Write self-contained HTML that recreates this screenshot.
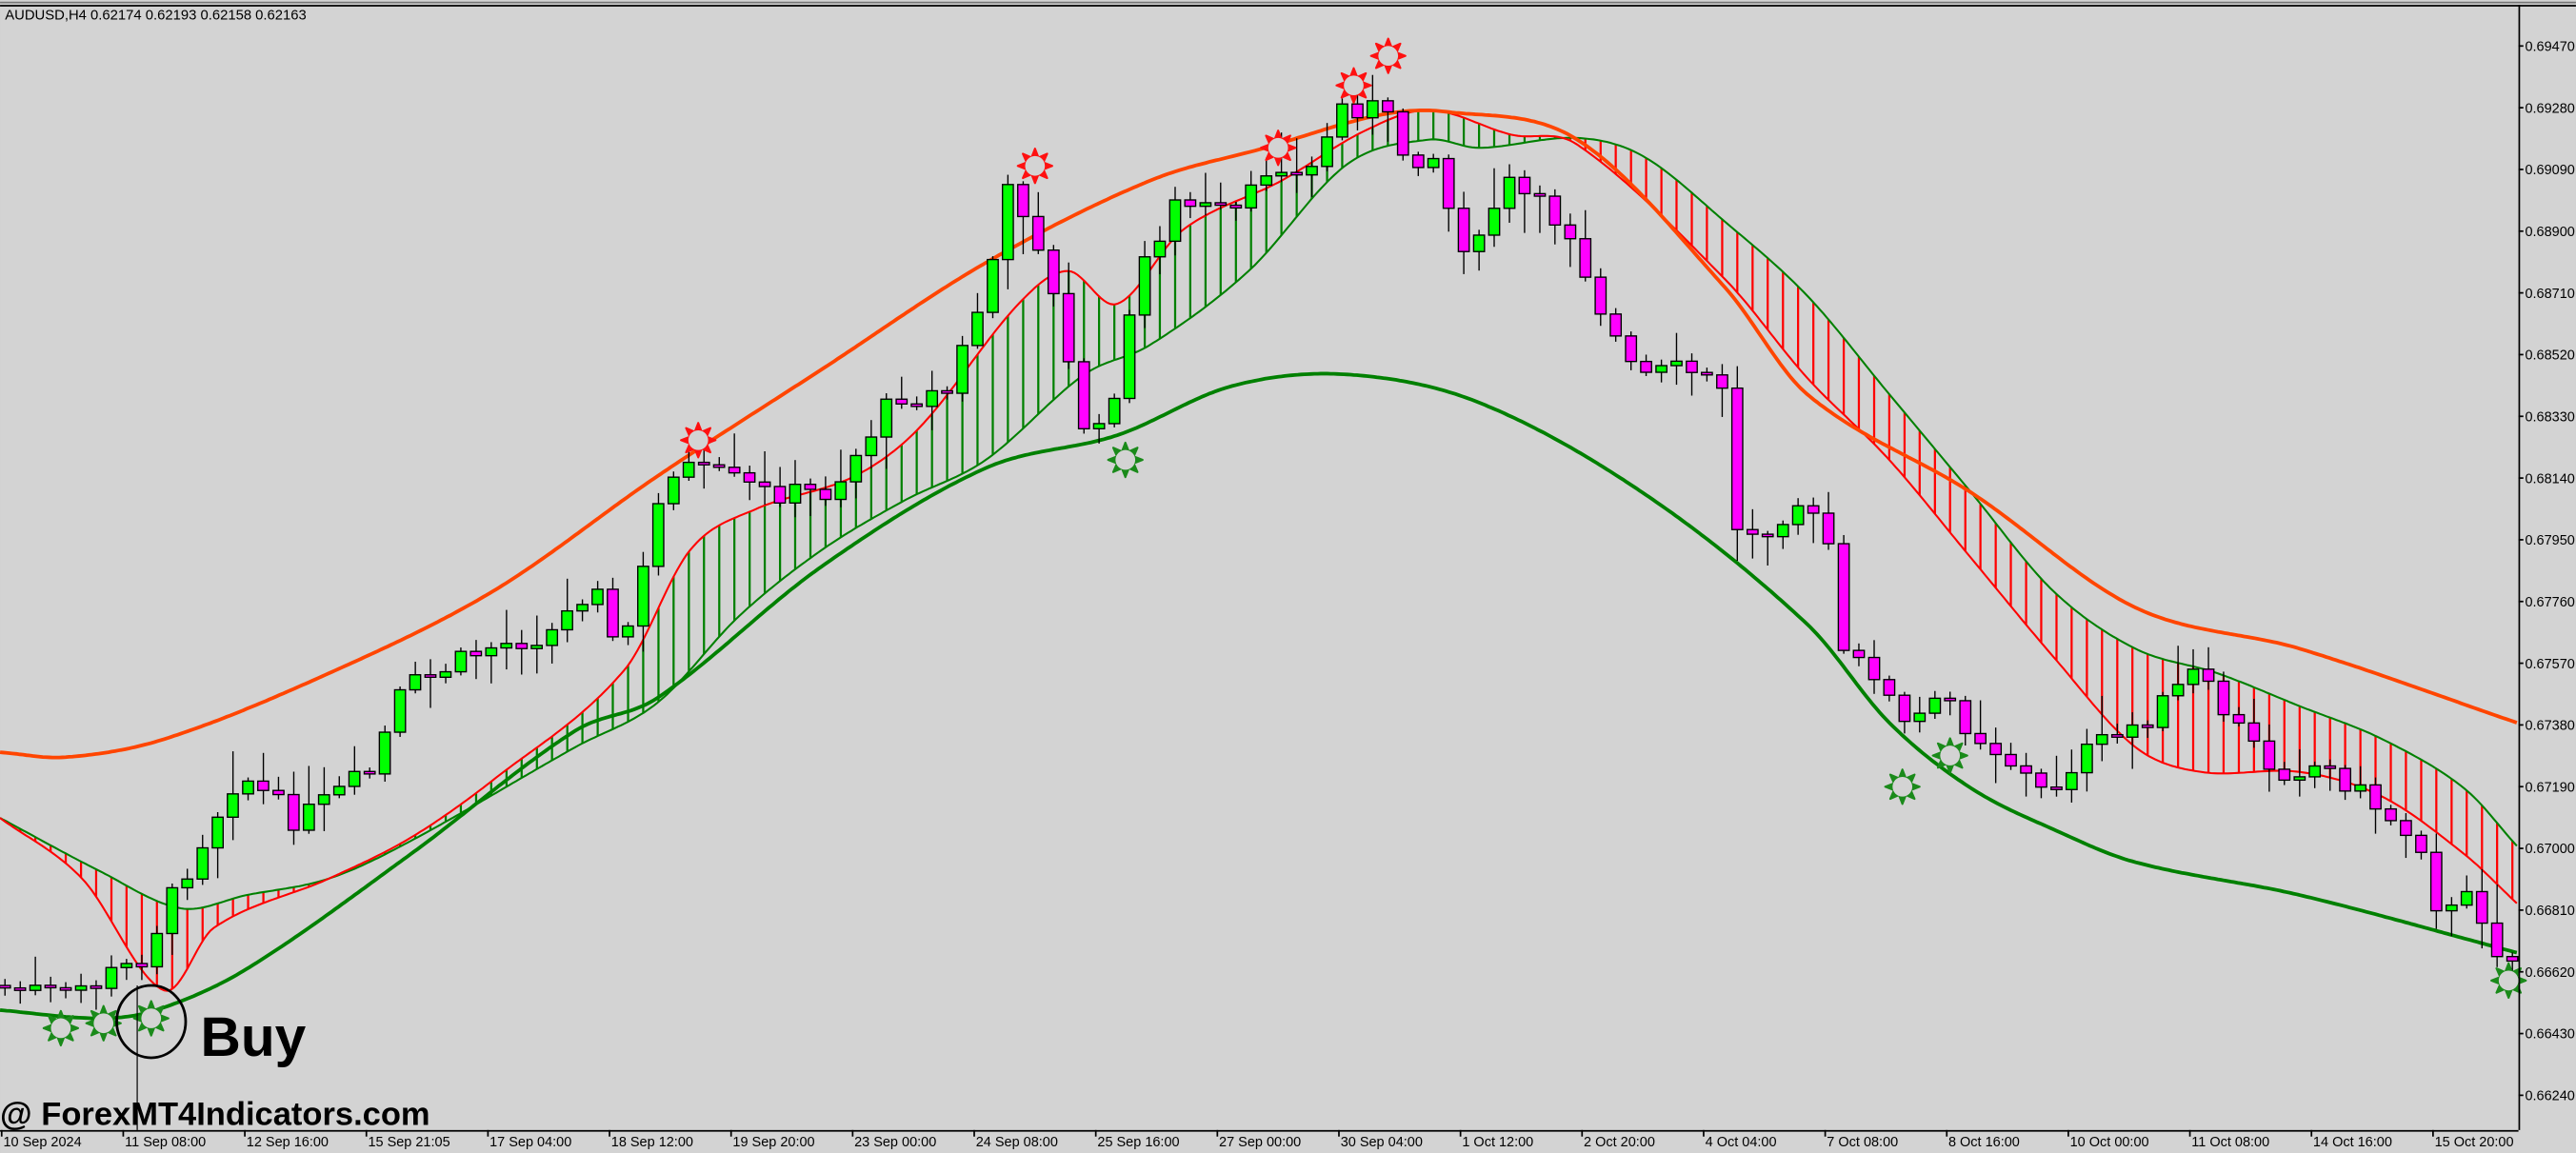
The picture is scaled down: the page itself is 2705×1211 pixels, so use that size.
<!DOCTYPE html>
<html><head><meta charset="utf-8"><style>
html,body{margin:0;padding:0;background:#d3d3d3;overflow:hidden}
svg{display:block}
text{font-family:"Liberation Sans",sans-serif}
</style></head><body>
<svg id="s" width="2705" height="1211" viewBox="0 0 1568 702" xmlns="http://www.w3.org/2000/svg">
<rect width="1568" height="702" fill="#d3d3d3"/>
<line x1="0" y1="1.5" x2="1568" y2="1.5" stroke="#777" stroke-width="1"/>
<line x1="0" y1="3.5" x2="1568" y2="3.5" stroke="#000" stroke-width="1"/>
<g id="hatch"></g>
<g id="lines"></g>
<g id="candles"></g>
<g id="sig"></g>
<line x1="1533.5" y1="3" x2="1533.5" y2="688" stroke="#000" stroke-width="1"/>
<line x1="0" y1="688.5" x2="1533" y2="688.5" stroke="#000" stroke-width="1"/>
<g id="axis" font-size="8.4" fill="#000"></g>
<text x="3" y="12" font-size="8.6" fill="#000">AUDUSD,H4  0.62174 0.62193 0.62158 0.62163</text>
<ellipse cx="92" cy="622" rx="21" ry="22" fill="none" stroke="#000" stroke-width="1.6"/>
<line x1="83.5" y1="600" x2="83.5" y2="688" stroke="#000" stroke-width="0.7"/>
<text x="122" y="643" font-size="34" font-weight="bold" fill="#000">Buy</text>
<text x="0" y="685" font-size="20" font-weight="bold" fill="#000">@ ForexMT4Indicators.com</text>
</svg>
<script>
const NS="http://www.w3.org/2000/svg";
function el(p,t,a){const e=document.createElementNS(NS,t);for(const k in a)e.setAttribute(k,a[k]);p.appendChild(e);return e;}
function interp(pts,x){if(x<=pts[0][0])return pts[0][1];for(let i=1;i<pts.length;i++){if(x<=pts[i][0]){const a=pts[i-1],b=pts[i];return a[1]+(b[1]-a[1])*(x-a[0])/(b[0]-a[0]);}}return pts[pts.length-1][1];}
function cr(pts,x){const n=pts.length;if(x<=pts[0][0])return pts[0][1];if(x>=pts[n-1][0])return pts[n-1][1];let i=1;while(pts[i][0]<x)i++;const p1=pts[i-1],p2=pts[i],p0=pts[Math.max(0,i-2)],p3=pts[Math.min(n-1,i+1)];const t=(x-p1[0])/(p2[0]-p1[0]);const m1=(p2[1]-p0[1])/(p2[0]-p0[0])*(p2[0]-p1[0]);const m2=(p3[1]-p1[1])/(p3[0]-p1[0])*(p2[0]-p1[0]);const t2=t*t,t3=t2*t;return (2*t3-3*t2+1)*p1[1]+(t3-2*t2+t)*m1+(-2*t3+3*t2)*p2[1]+(t3-t2)*m2;}
function smooth(pts){let d="";for(let x=0;x<=1532;x+=2){d+=(x?"L":"M")+x+","+cr(pts,x).toFixed(1);}return d;}
const upper=[[0,458],[40,461],[100,450],[200,410],[300,360],[400,290],[500,225],[600,160],[700,110],[770,90],[840,70],[880,68],[960,85],[1050,175],[1100,240],[1200,300],[1300,370],[1400,395],[1532,440]];
const lower=[[0,615],[60,620],[95,615],[150,590],[250,520],[350,445],[400,425],[500,345],[600,285],[680,265],[750,235],[820,228],[900,245],[1000,300],[1100,380],[1150,440],[1200,480],[1250,505],[1300,525],[1400,545],[1532,580]];
const fast=[[0,498],[50,535],[100,603],[130,565],[200,535],[250,510],[300,475],[380,408],[420,335],[460,310],[520,290],[560,260],[620,185],[650,165],[680,185],[720,140],[780,110],[830,80],[870,67],[920,82],[960,88],[1050,170],[1100,230],[1150,280],[1200,340],[1250,400],[1300,455],[1340,470],[1400,470],[1450,485],[1500,520],[1532,550]];
const slow=[[0,498],[60,530],[110,553],[150,545],[200,535],[250,512],[350,455],[400,428],[450,375],[500,335],[550,305],[600,280],[660,228],[700,210],[760,165],[820,100],[870,85],[900,90],[960,84],[1000,95],[1050,135],[1100,180],[1150,240],[1200,300],[1250,360],[1300,395],[1350,410],[1400,430],[1450,450],[1500,480],[1532,515]];
const H=document.getElementById('hatch'),L=document.getElementById('lines'),C=document.getElementById('candles'),S=document.getElementById('sig'),A=document.getElementById('axis');
const step=9.25;
for(let x=3;x<1532;x+=step){const a=cr(fast,x),b=cr(slow,x);el(H,'line',{x1:x.toFixed(1),y1:a,x2:x.toFixed(1),y2:b,stroke:a<b?'#008000':'#ff0000','stroke-width':1.3});}
el(L,'path',{d:smooth(slow),fill:'none',stroke:'#008000','stroke-width':1.2});
el(L,'path',{d:smooth(fast),fill:'none',stroke:'#ff0000','stroke-width':1.2});
el(L,'path',{d:smooth(upper),fill:'none',stroke:'#ff4500','stroke-width':2.2});
el(L,'path',{d:smooth(lower),fill:'none',stroke:'#008000','stroke-width':2.2});
const path=[[0,600],[45,605],[90,585],[110,545],[150,470],[185,500],[230,470],[250,420],[300,395],[340,385],[370,350],[380,405],[400,335],[410,285],[430,285],[470,300],[510,300],[550,240],[580,240],[605,175],[620,110],[640,155],[660,245],[670,275],[685,230],[700,160],[720,125],[760,130],[780,95],[800,110],[820,65],[845,65],[860,95],[880,95],[890,145],[905,150],[920,110],[960,140],[980,190],[1000,230],[1030,225],[1055,235],[1060,325],[1080,320],[1100,305],[1120,335],[1125,400],[1150,410],[1160,445],[1190,425],[1200,440],[1230,465],[1250,485],[1270,460],[1290,450],[1320,430],[1340,410],[1360,435],[1390,470],[1420,465],[1450,490],[1480,515],[1490,560],[1510,545],[1528,585]];
let seed=7;function rnd(){seed=(seed*9301+49297)%233280;return seed/233280;}
let prev=interp(path,0);
for(let x=3;x<1530;x+=step){let c=interp(path,x+step/2)+(rnd()-0.5)*14;let o=prev;if(Math.abs(c-o)<1.5)c=o+1.5;const top=Math.min(o,c),bot=Math.max(o,c);
el(C,'line',{x1:x.toFixed(1),x2:x.toFixed(1),y1:top-2-rnd()*rnd()*30,y2:bot+2+rnd()*rnd()*25,stroke:'#000','stroke-width':0.8});
el(C,'rect',{x:(x-3.3).toFixed(1),y:top,width:6.6,height:bot-top,fill:c<o?'#00ff00':'#ff00ff',stroke:'#000','stroke-width':0.8});prev=c;}
function star(x,y,col){let d="";const n=8;for(let i=0;i<n*2;i++){const r=i%2?5.5:10.5;const a=Math.PI*i/n-Math.PI/2;d+=(i?"L":"M")+(x+r*Math.cos(a)).toFixed(1)+","+(y+r*Math.sin(a)).toFixed(1);}d+="Z";el(S,'path',{d,fill:col,stroke:col,'stroke-width':1.2,'stroke-linejoin':'round'});el(S,'circle',{cx:x,cy:y,r:6,fill:'#d3d3d3'});}
[[425,268],[630,101],[778,90],[824,52],[845,34]].forEach(p=>star(p[0],p[1],'#ff1010'));
[[37,626],[63,623],[92,620],[685,280],[1158,479],[1187,460],[1527,597]].forEach(p=>star(p[0],p[1],'#1a8a1a'));
const prices=["0.69470","0.69280","0.69090","0.68900","0.68710","0.68520","0.68330","0.68140","0.67950","0.67760","0.67570","0.67380","0.67190","0.67000","0.66810","0.66620","0.66430","0.66240"];
prices.forEach((p,i)=>{const y=28+i*37.58;el(A,'line',{x1:1533,x2:1536,y1:y,y2:y,stroke:'#000'});const t=el(A,'text',{x:1537,y:y+3});t.textContent=p;});
const dates=[[1,"10 Sep 2024"],[75,"11 Sep 08:00"],[149,"12 Sep 16:00"],[223,"15 Sep 21:05"],[297,"17 Sep 04:00"],[371,"18 Sep 12:00"],[445,"19 Sep 20:00"],[519,"23 Sep 00:00"],[593,"24 Sep 08:00"],[667,"25 Sep 16:00"],[741,"27 Sep 00:00"],[815,"30 Sep 04:00"],[889,"1 Oct 12:00"],[963,"2 Oct 20:00"],[1037,"4 Oct 04:00"],[1111,"7 Oct 08:00"],[1185,"8 Oct 16:00"],[1259,"10 Oct 00:00"],[1333,"11 Oct 08:00"],[1407,"14 Oct 16:00"],[1481,"15 Oct 20:00"]];
dates.forEach(d=>{el(A,'line',{x1:d[0],x2:d[0],y1:688,y2:692,stroke:'#000'});const t=el(A,'text',{x:d[0]+1,y:698});t.textContent=d[1];});
</script>
</body></html>
